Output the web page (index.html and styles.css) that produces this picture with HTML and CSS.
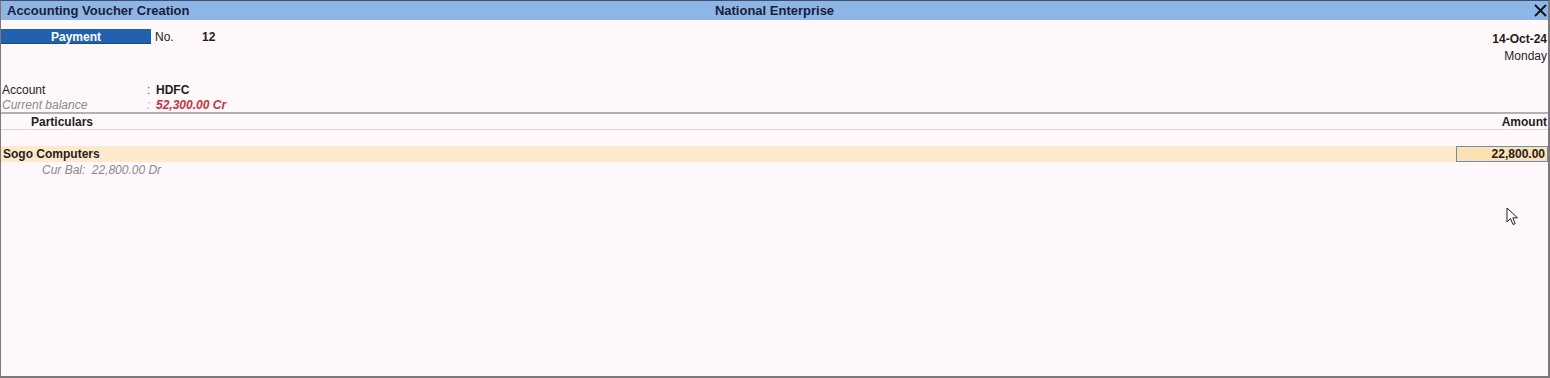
FILE: index.html
```html
<!DOCTYPE html>
<html lang="en">
<head>
  <meta charset="UTF-8" />
  <meta name="viewport" content="width=device-width, initial-scale=1.0" />
  <title>Accounting Voucher Creation</title>
  <link rel="stylesheet" href="styles.css">
</head>
<body>
  <div class="window">
    <div class="titlebar">
      <span class="title-left">Accounting Voucher Creation</span>
      <span class="title-center">National Enterprise</span>
      <span class="close-btn">
        <svg width="13" height="13" viewBox="0 0 13 13"><path d="M1 1 L12 12 M12 1 L1 12" stroke="#111" stroke-width="1.8" fill="none"/></svg>
      </span>
    </div>

    <div class="voucher-head">
      <div class="vtype-row">
        <span class="vtype">Payment</span>
        <span class="no-label">No.</span>
        <span class="no-value">12</span>
      </div>
      <div class="date-block">
        <div class="date">14-Oct-24</div>
        <div class="day">Monday</div>
      </div>
    </div>

    <div class="account-block">
      <div class="field-row">
        <span class="label">Account</span>
        <span class="colon">:</span>
        <span class="value">HDFC</span>
      </div>
      <div class="field-row muted">
        <span class="label">Current balance</span>
        <span class="colon">:</span>
        <span class="value balance">52,300.00 Cr</span>
      </div>
    </div>

    <div class="table-head">
      <span class="col-particulars">Particulars</span>
      <span class="col-amount">Amount</span>
    </div>

    <div class="entries">
      <div class="entry-row active">
        <span class="ledger">Sogo Computers</span>
        <span class="amount-box">22,800.00</span>
      </div>
      <div class="entry-sub">
        <span class="sub-label">Cur Bal:</span>
        <span>22,800.00 Dr</span>
      </div>
    </div>

    <svg class="cursor" width="13" height="19" viewBox="0 0 13 19">
      <path d="M1 1 L1 15 L4.5 11.5 L7 17.5 L9.2 16.6 L6.8 10.8 L11.5 10.8 Z" fill="#fff" stroke="#222" stroke-width="1" stroke-linejoin="round"/>
    </svg>
  </div>
</body>
</html>
```

FILE: styles.css
```css
html, body {
  margin: 0;
  padding: 0;
}
body {
  font-family: "Liberation Sans", Arial, sans-serif;
  font-size: 12px;
  color: #1e1e1e;
  background: #fff8fa;
}
.window {
  position: relative;
  width: 1550px;
  height: 378px;
  box-sizing: border-box;
  border-top: 1px solid #3f4f6e;
  border-left: 1px solid #7a7a7a;
  border-right: 2px solid #7a7a7a;
  border-bottom: 2px solid #7a7a7a;
  background: #fff8fa;
}
.titlebar {
  position: relative;
  height: 19px;
  background: #8db5e6;
  display: flex;
  align-items: center;
  font-size: 13px;
  font-weight: bold;
  color: #1a1d38;
}
.title-left {
  padding-left: 6px;
}
.title-center {
  position: absolute;
  left: 0;
  right: 0;
  text-align: center;
  pointer-events: none;
}
.close-btn {
  margin-left: auto;
  margin-right: 1px;
  display: flex;
  align-items: center;
}
.voucher-head {
  display: flex;
  justify-content: space-between;
  padding-top: 9px;
  height: 54px;
}
.vtype-row {
  display: flex;
  align-items: flex-start;
  height: 15px;
}
.vtype {
  width: 150px;
  height: 14px;
  line-height: 16px;
  background: #2261b0;
  border-bottom: 1px solid #1a4a86;
  color: #fff;
  font-weight: bold;
  text-align: center;
}
.no-label {
  margin-left: 4px;
  width: 47px;
  line-height: 17px;
}
.no-value {
  font-weight: bold;
  line-height: 17px;
}
.date-block {
  text-align: right;
  padding-right: 1px;
  padding-top: 2px;
  line-height: 17px;
}
.date {
  font-weight: bold;
}
.account-block {
  padding-left: 1px;
  line-height: 15px;
  height: 29px;
}
.field-row {
  display: flex;
}
.label {
  width: 145px;
}
.colon {
  width: 9px;
  color: #555;
}
.value {
  font-weight: bold;
}
.muted {
  color: #8a8a8a;
  font-style: italic;
}
.muted .colon {
  color: #aaa;
}
.balance {
  color: #c9323d;
}
.table-head {
  display: flex;
  justify-content: space-between;
  border-top: 2px solid #b4b0b2;
  border-bottom: 1px solid #ead2da;
  height: 15px;
  line-height: 16px;
  font-weight: bold;
  padding: 0 1px 0 0;
}
.col-particulars {
  padding-left: 30px;
}
.entries {
  padding-top: 16px;
}
.entry-row {
  display: flex;
  justify-content: space-between;
  align-items: center;
  height: 16px;
}
.entry-row.active {
  background: #fdeacb;
}
.ledger {
  padding-left: 2px;
  font-weight: bold;
}
.amount-box {
  width: 88px;
  height: 14px;
  line-height: 14px;
  padding-right: 2px;
  text-align: right;
  font-weight: bold;
  background: #fde1b3;
  border: 1px solid #6d8eac;
}
.entry-sub {
  padding-left: 41px;
  line-height: 16px;
  color: #8a8a8a;
  font-style: italic;
}
.sub-label {
  margin-right: 3px;
}
.cursor {
  position: absolute;
  left: 1505px;
  top: 206px;
}
```
